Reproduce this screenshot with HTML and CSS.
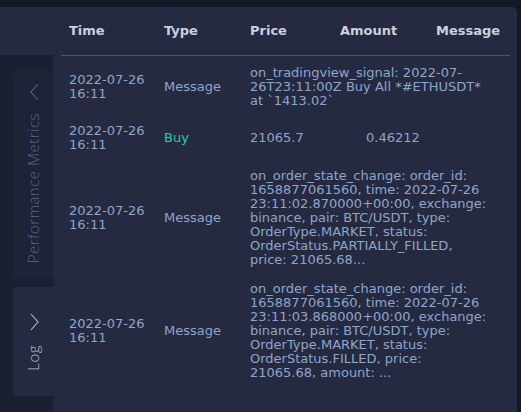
FILE: index.html
```html
<!DOCTYPE html>
<html lang="en">
<head>
<meta charset="utf-8">
<title>Log</title>
<link rel="stylesheet" href="styles.css">
</head>
<body>
<div class="app">
  <aside class="sidebar">
    <div class="sidebar-head"></div>
    <div class="sidebar-body">
      <div class="tab tab-perf">
        <svg class="chev" width="9" height="18" viewBox="0 0 9 18"><polyline points="8,1 1,9 8,17" fill="none" stroke="currentColor" stroke-width="1.1"/></svg>
        <span class="tab-label">Performance Metrics</span>
      </div>
      <div class="tab tab-log">
        <svg class="chev" width="9" height="18" viewBox="0 0 9 18"><polyline points="1,1 8,9 1,17" fill="none" stroke="currentColor" stroke-width="1.1"/></svg>
        <span class="tab-label">Log</span>
      </div>
    </div>
  </aside>
  <main class="panel">
    <div class="thead">
      <div class="th">Time</div>
      <div class="th">Type</div>
      <div class="th">Price</div>
      <div class="th">Amount</div>
      <div class="th">Message</div>
    </div>
    <div class="tbody">
      <div class="row">
        <div class="td">2022-07-26<br>16:11</div>
        <div class="td">Message</div>
        <div class="td msg">on_tradingview_signal: 2022-07-<br>26T23:11:00Z Buy All *#ETHUSDT*<br>at `1413.02`</div>
      </div>
      <div class="row row-trade">
        <div class="td">2022-07-26<br>16:11</div>
        <div class="td buy">Buy</div>
        <div class="td">21065.7</div>
        <div class="td">0.46212</div>
      </div>
      <div class="row">
        <div class="td">2022-07-26<br>16:11</div>
        <div class="td">Message</div>
        <div class="td msg">on_order_state_change: order_id:<br>1658877061560, time: 2022-07-26<br>23:11:02.870000+00:00, exchange:<br>binance, pair: BTC/USDT, type:<br>OrderType.MARKET, status:<br>OrderStatus.PARTIALLY_FILLED,<br>price: 21065.68...</div>
      </div>
      <div class="row">
        <div class="td">2022-07-26<br>16:11</div>
        <div class="td">Message</div>
        <div class="td msg">on_order_state_change: order_id:<br>1658877061560, time: 2022-07-26<br>23:11:03.868000+00:00, exchange:<br>binance, pair: BTC/USDT, type:<br>OrderType.MARKET, status:<br>OrderStatus.FILLED, price:<br>21065.68, amount: ...</div>
      </div>
    </div>
  </main>
</div>
</body>
</html>
```

FILE: styles.css
```css
html, body {
  margin: 0;
  padding: 0;
}
body {
  width: 521px;
  height: 412px;
  overflow: hidden;
  background: #131827;
  font-family: "DejaVu Sans", "Noto Sans", sans-serif;
  font-size: 13px;
  line-height: 14px;
}
.app {
  display: flex;
  height: 412px;
  box-sizing: border-box;
  padding-top: 7px;
  padding-right: 4px;
}
.sidebar {
  width: 53px;
  flex: none;
  display: flex;
  flex-direction: column;
}
.sidebar-head {
  height: 48px;
  flex: none;
  background: #252a40;
}
.sidebar-body {
  flex: 1;
  background: #1a1f31;
  padding-top: 15px;
  display: flex;
  flex-direction: column;
  align-items: flex-end;
  gap: 10px;
}
.tab {
  width: 40px;
  border-radius: 4px 0 0 4px;
  display: flex;
  flex-direction: column;
  align-items: center;
  justify-content: center;
  box-sizing: border-box;
}
.tab-perf {
  height: 207px;
  background: #1e2337;
  color: #586482;
  gap: 12px;
}
.tab-log {
  height: 109px;
  background: #252a40;
  color: #b2bcd1;
  gap: 14px;
}
.chev {
  display: block;
  margin-left: 3px;
}
.tab-label {
  writing-mode: vertical-rl;
  transform: rotate(180deg);
  font-family: "Open Sans", "DejaVu Sans", sans-serif;
  font-weight: 300;
  font-size: 15px;
  line-height: 16px;
  letter-spacing: 0.5px;
  white-space: nowrap;
}
.panel {
  flex: 1;
  background: #252a40;
  border-radius: 0 5px 0 0;
  padding: 0 7px 0 8px;
  box-shadow: inset 1px 0 0 #22263a;
}
.thead {
  display: grid;
  grid-template-columns: 95px 86px 90px 96px 1fr;
  height: 48px;
  align-items: center;
  border-bottom: 1px solid #4a5471;
}
.th {
  padding: 0 8px;
  font-weight: bold;
  color: #c9d0df;
  white-space: nowrap;
}
.tbody {
  padding-top: 2px;
}
.row {
  display: grid;
  grid-template-columns: 95px 86px 116px 1fr;
  align-items: center;
  padding: 7.5px 0;
  color: #8fa5cb;
}
.row-trade {
  padding: 9px 0;
}
.td {
  padding: 0 8px;
  white-space: nowrap;
}
.msg {
  grid-column: 3 / -1;
}
.buy {
  color: #18d2a7;
}
```
